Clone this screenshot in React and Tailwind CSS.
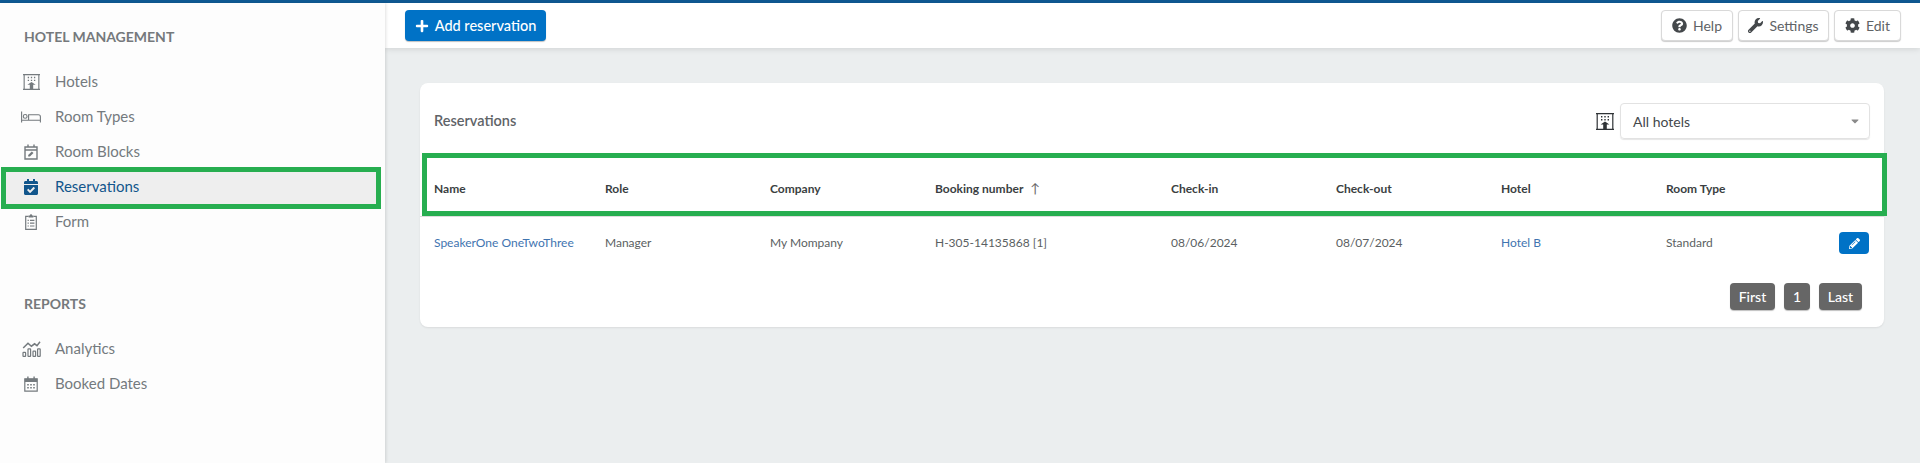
import React from 'react';
import { FaPlus, FaQuestionCircle, FaWrench, FaCog, FaPencilAlt, FaCalendarCheck, FaCaretDown } from 'react-icons/fa';

const HotelIcon = ({ className }) => (
  <svg viewBox="0 0 18 17" className={className} fill="none" stroke="currentColor" strokeWidth="1.2">
    <path d="M0 16.4h18M0 .6h18M1.2.6v15.8M16.8.6v15.8" />
    <path
      d="M5 3h1.4v1.4H5zM8.3 3h1.4v1.4H8.3zM11.6 3h1.4v1.4h-1.4zM5 6h1.4v1.4H5zM8.3 6h1.4v1.4H8.3zM11.6 6h1.4v1.4h-1.4zM4.6 11.4 9 8.6l4.4 2.8zM7.2 11.4h3.6v5H7.2z"
      fill="currentColor"
      stroke="none"
    />
  </svg>
);

const BedIcon = ({ className }) => (
  <svg viewBox="0 0 20 12" className={className} fill="none" stroke="currentColor" strokeWidth="1.1">
    <path d="M.6.5v11M.6 9.2h18.8M19.4 11.5V5.8a2 2 0 0 0-2-2H7.6v5.4" />
    <circle cx="4.2" cy="5.4" r="1.9" />
  </svg>
);

const CalendarEditIcon = ({ className }) => (
  <svg viewBox="0 0 14 16" className={className} fill="none" stroke="currentColor" strokeWidth="1.4">
    <path d="M1 3h12v12H1zM1 6h12M4 .6v3M10 .6v3" />
    <path d="M4.2 12.6v-1.7l3.6-3.5 1.7 1.7-3.6 3.5z" fill="currentColor" stroke="none" />
  </svg>
);

const ClipboardIcon = ({ className }) => (
  <svg viewBox="0 0 12 16" className={className} fill="none" stroke="currentColor" strokeWidth="1.2">
    <path d="M3.6 2.4H.7v12.9h10.6V2.4H8.4" />
    <path d="M3.6 1.4h1.2a1.2 1.2 0 0 1 2.4 0h1.2v2.2H3.6z" fill="currentColor" stroke="none" />
    <path d="M2.6 6.4h1.2M5 6.4h4.4M2.6 9.2h1.2M5 9.2h4.4M2.6 12h1.2M5 12h4.4" />
  </svg>
);

const AnalyticsIcon = ({ className }) => (
  <svg viewBox="0 0 19 16" className={className} fill="none" stroke="currentColor">
    <path d="M1.2 7 6 2.2l3.4 3 3.2-2.4 2.4 1.8L18 .8" strokeWidth="1.5" />
    <rect x="1" y="11.4" width="2.6" height="4" rx=".5" strokeWidth="1.2" />
    <rect x="6" y="7.8" width="2.6" height="7.6" rx=".5" strokeWidth="1.2" />
    <rect x="11" y="10.2" width="2.6" height="5.2" rx=".5" strokeWidth="1.2" />
    <rect x="15.6" y="7.8" width="2.6" height="7.6" rx=".5" strokeWidth="1.2" />
  </svg>
);

const CalendarGridIcon = ({ className }) => (
  <svg viewBox="0 0 14 16" className={className} fill="none" stroke="currentColor" strokeWidth="1.2">
    <path d="M.8 2.8h12.4v12.4H.8z" />
    <path d="M.8 2.8h12.4v3.2H.8zM3.2.4h1.4v3H3.2zM9.4.4h1.4v3H9.4z" fill="currentColor" stroke="none" />
    <path
      d="M3.2 8h1.6v1.5H3.2zM6.2 8h1.6v1.5H6.2zM9.2 8h1.6v1.5H9.2zM3.2 11h1.6v1.5H3.2zM6.2 11h1.6v1.5H6.2zM9.2 11h1.6v1.5H9.2z"
      fill="currentColor"
      stroke="none"
    />
  </svg>
);

const NavItem = ({ icon: Icon, iconClass, label, active }) => (
  <div className={`flex h-[35px] items-center ${active ? 'bg-[#eeeeee] text-[#12568c]' : 'text-[#747a7e]'}`}>
    <span className="flex w-[52px] shrink-0 justify-center pl-[4px]">
      <Icon className={iconClass} />
    </span>
    <span className="text-[15px]">{label}</span>
  </div>
);

const TopButton = ({ icon: Icon, label, className }) => (
  <button className={`flex h-[31px] items-center justify-center gap-[6px] rounded-[4px] border border-[#d9d9d9] bg-white text-[14px] text-[#5f6366] shadow-[0_1px_1px_rgba(0,0,0,0.2)] ${className}`}>
    <Icon className="h-[15px] w-[15px] text-[#44484b]" />
    {label}
  </button>
);

const PageButton = ({ label, className }) => (
  <span className={`flex h-[27px] items-center justify-center rounded-[4px] bg-[#666666] text-[14px] font-medium text-white shadow-[0_1px_1px_rgba(0,0,0,0.25)] ${className}`}>
    {label}
  </span>
);

const columns = [
  { name: 'Name', width: 'w-[171px]' },
  { name: 'Role', width: 'w-[165px]' },
  { name: 'Company', width: 'w-[165px]' },
  { name: 'Booking number', width: 'w-[236px]', sorted: true },
  { name: 'Check-in', width: 'w-[165px]' },
  { name: 'Check-out', width: 'w-[165px]' },
  { name: 'Hotel', width: 'w-[165px]' },
  { name: 'Room Type', width: 'w-[150px]' },
];

const App = () => {
  return (
    <div className="relative flex h-[463px] w-[1920px] flex-col overflow-hidden bg-[#ebeeef] font-['Lato',sans-serif]">
      <div className="h-[3px] shrink-0 bg-[#0f5a94]" />

      <div className="flex min-h-0 flex-1">
        {/* Sidebar */}
        <aside className="z-10 w-[385px] shrink-0 bg-[#fdfdfd] shadow-[1px_0_3px_rgba(0,0,0,0.12)]">
          <h3 className="pl-[24px] pt-[25px] text-[14px] leading-[18px] font-bold text-[#75797c]">HOTEL MANAGEMENT</h3>
          <nav className="mt-[18px] pr-[7px] pl-[3px]">
            <NavItem icon={HotelIcon} iconClass="h-[16px] w-[17px]" label="Hotels" />
            <NavItem icon={BedIcon} iconClass="h-[12px] w-[20px]" label="Room Types" />
            <NavItem icon={CalendarEditIcon} iconClass="h-[16px] w-[14px]" label="Room Blocks" />
            <NavItem icon={FaCalendarCheck} iconClass="h-[16px] w-[14px]" label="Reservations" active />
            <NavItem icon={ClipboardIcon} iconClass="h-[16px] w-[12px]" label="Form" />
          </nav>
          <h3 className="mt-[56px] pl-[24px] text-[14px] leading-[18px] font-bold text-[#75797c]">REPORTS</h3>
          <nav className="mt-[18px] pr-[7px] pl-[3px]">
            <NavItem icon={AnalyticsIcon} iconClass="h-[16px] w-[19px]" label="Analytics" />
            <NavItem icon={CalendarGridIcon} iconClass="h-[16px] w-[14px]" label="Booked Dates" />
          </nav>
        </aside>

        {/* Main */}
        <main className="flex min-w-0 flex-1 flex-col">
          <header className="flex h-[45px] shrink-0 items-start justify-between bg-white pt-[7px] pr-[19px] pl-[20px] shadow-[0_1px_6px_rgba(0,0,0,0.12)]">
            <button className="flex h-[31px] w-[141px] items-center justify-center gap-[6px] rounded-[4px] bg-[#0072c6] text-[14.5px] font-medium text-white shadow-[0_1px_1px_rgba(0,0,0,0.25)]">
              <FaPlus className="h-[14px] w-[14px]" />
              Add reservation
            </button>
            <div className="flex gap-[5px]">
              <TopButton icon={FaQuestionCircle} label="Help" className="w-[72px]" />
              <TopButton icon={FaWrench} label="Settings" className="w-[91px]" />
              <TopButton icon={FaCog} label="Edit" className="w-[67px]" />
            </div>
          </header>

          <section className="mt-[35px] mr-[36px] ml-[35px] h-[244px] rounded-[8px] bg-white px-[14px] shadow-[0_1px_2px_rgba(0,0,0,0.08)]">
            <div className="flex h-[76px] items-center justify-between">
              <h2 className="text-[14.5px] font-semibold text-[#5f6468]">Reservations</h2>
              <div className="flex items-center gap-[6px]">
                <HotelIcon className="h-[17px] w-[18px] text-[#2f3336]" />
                <div className="flex h-[36px] w-[250px] items-center justify-between rounded-[4px] border border-[#e2e2e2] pr-[9px] pl-[12px] text-[14px] text-[#44484b] shadow-[0_1px_1px_rgba(0,0,0,0.1)]">
                  All hotels
                  <FaCaretDown className="h-[12px] w-[10px] text-[#8a8a8a]" />
                </div>
              </div>
            </div>

            <div className="-mx-[14px] flex h-[58px] items-center border-b border-[#dddddd] px-[14px] pt-[2px] text-[12px] font-bold text-[#3b3f42]">
              {columns.map(col => (
                <div key={col.name} className={`${col.width} flex items-center gap-[7px]`}>
                  {col.name}
                  {col.sorted && <span className="text-[13px] font-normal text-[#666666]">↑</span>}
                </div>
              ))}
            </div>

            <div className="flex h-[52px] items-center text-[12px] text-[#5b5f62]">
              <a className="w-[171px] text-[#3f74b0]">SpeakerOne OneTwoThree</a>
              <span className="w-[165px]">Manager</span>
              <span className="w-[165px]">My Mompany</span>
              <span className="w-[236px]">H-305-14135868 [1]</span>
              <span className="w-[165px]">08/06/2024</span>
              <span className="w-[165px]">08/07/2024</span>
              <a className="w-[165px] text-[#3f74b0]">Hotel B</a>
              <span>Standard</span>
              <button className="ml-auto mr-[1px] flex h-[22px] w-[30px] items-center justify-center rounded-[4px] bg-[#0072c6] text-white">
                <FaPencilAlt className="h-[11px] w-[11px]" />
              </button>
            </div>

            <div className="mt-[14px] flex justify-end gap-[9px] pr-[8px]">
              <PageButton label="First" className="w-[45px]" />
              <PageButton label="1" className="w-[26px]" />
              <PageButton label="Last" className="w-[43px]" />
            </div>
          </section>
        </main>
      </div>

      {/* Green highlight frames drawn over the screenshot */}
      <div className="absolute top-[167px] left-[1px] z-20 h-[42px] w-[380px] border-[5px] border-[#27ae50]" />
      <div className="absolute top-[153px] left-[422px] z-20 h-[63px] w-[1465px] border-[5px] border-[#27ae50]" />
    </div>
  );
};

export default App;
